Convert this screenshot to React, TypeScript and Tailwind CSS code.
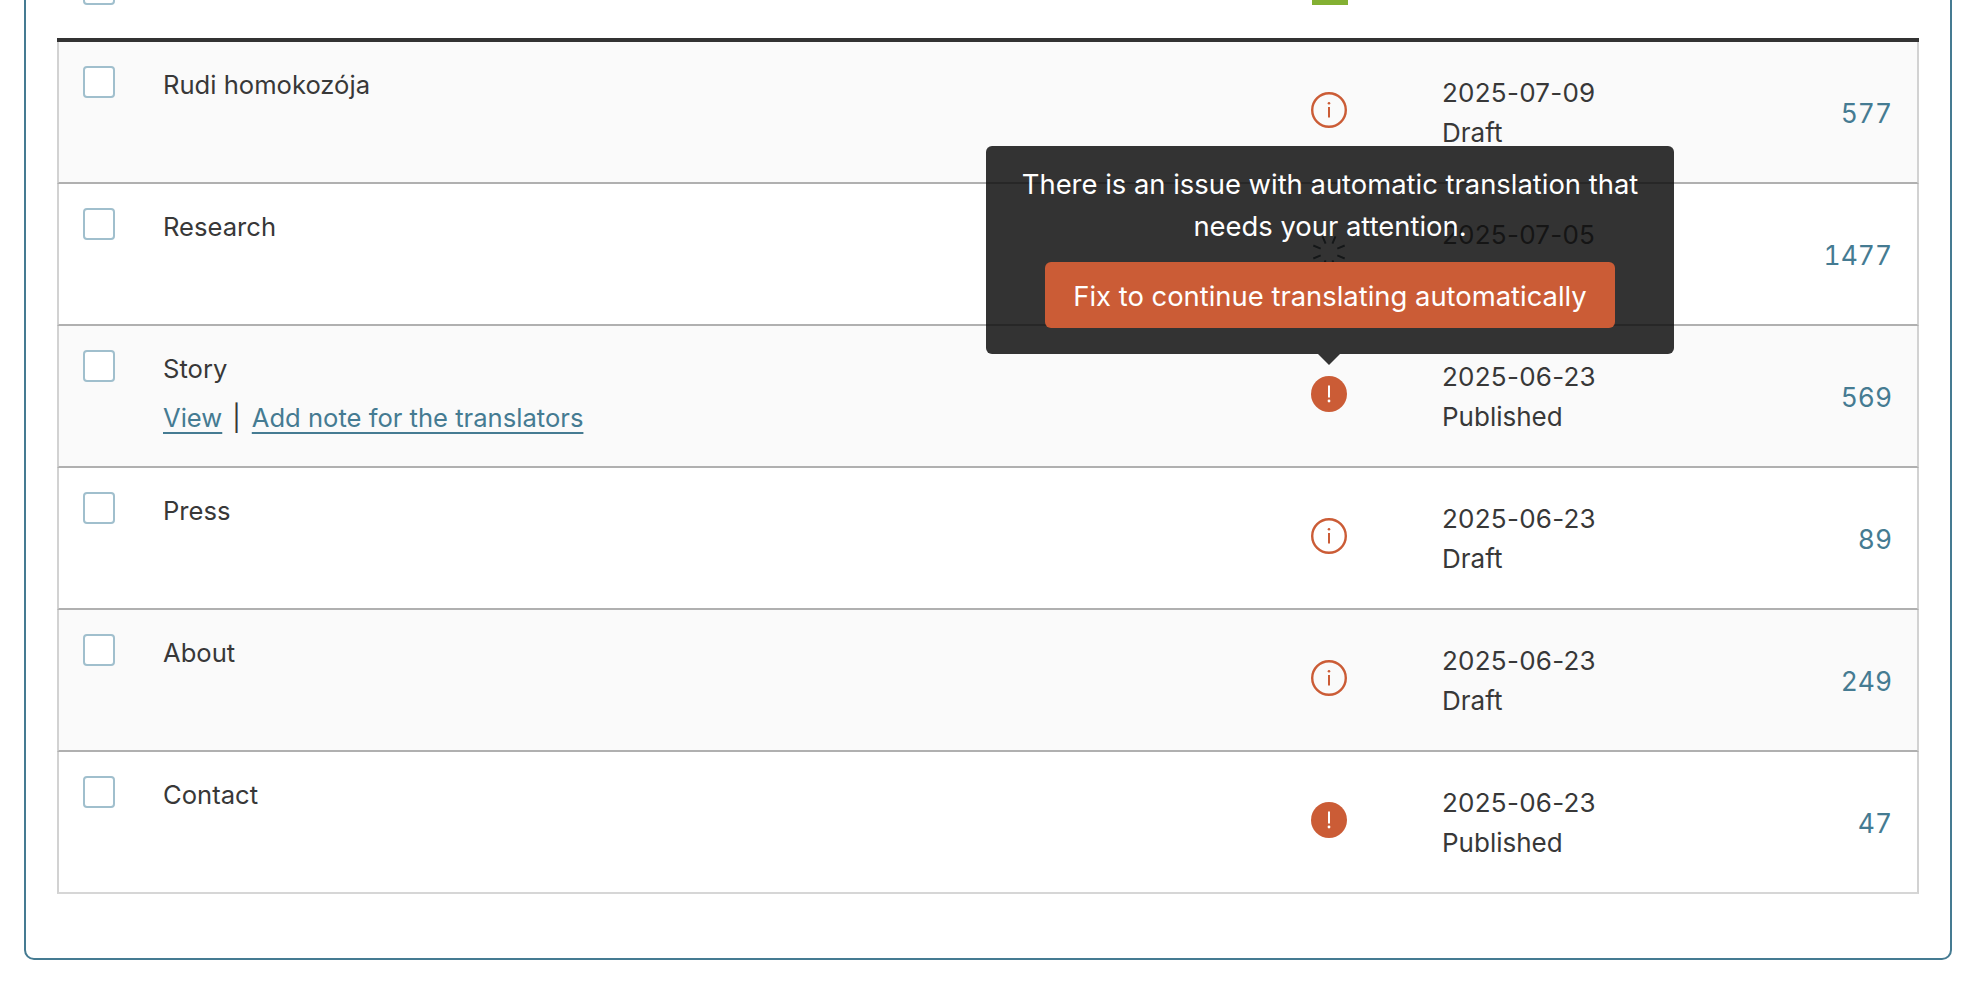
import React from "react";

type Row = {
  title: string;
  date: string;
  status: string;
  count: number;
  icon: "info" | "error" | "spinner";
  hovered?: boolean;
};

const rows: Row[] = [
  { title: "Rudi homokozója", date: "2025-07-09", status: "Draft", count: 577, icon: "info" },
  { title: "Research", date: "2025-07-05", status: "Draft", count: 1477, icon: "spinner" },
  { title: "Story", date: "2025-06-23", status: "Published", count: 569, icon: "error", hovered: true },
  { title: "Press", date: "2025-06-23", status: "Draft", count: 89, icon: "info" },
  { title: "About", date: "2025-06-23", status: "Draft", count: 249, icon: "info" },
  { title: "Contact", date: "2025-06-23", status: "Published", count: 47, icon: "error" },
];

const Checkbox = () => (
  <span className="block w-8 h-8 rounded-[4px] border-2 border-[#a0bfcd] bg-white" />
);

const StatusIcon = ({ icon }: { icon: Row["icon"] }) => {
  if (icon === "info") {
    return (
      <svg width="36" height="36" viewBox="0 0 36 36" fill="none">
        <circle cx="18" cy="18" r="16.8" stroke="#cb5c36" strokeWidth="2.4" />
        <circle cx="18" cy="11.2" r="1.3" fill="#cb5c36" />
        <path d="M18 15v10.5" stroke="#cb5c36" strokeWidth="2" />
      </svg>
    );
  }
  if (icon === "error") {
    return (
      <svg width="36" height="36" viewBox="0 0 36 36" fill="none">
        <circle cx="18" cy="18" r="18" fill="#cb5c36" />
        <path d="M18 9.5v12" stroke="#fff" strokeWidth="2" />
        <circle cx="18" cy="25" r="1.4" fill="#fff" />
      </svg>
    );
  }
  return (
    <svg width="36" height="36" viewBox="0 0 36 36" fill="none" stroke="#33424b" strokeWidth="2">
      <path d="M26.3 14.6l7.4-3.1M26.3 21.4l7.4 3.1M9.7 14.6l-7.4-3.1M9.7 21.4l-7.4 3.1M14.6 9.7l-3.1-7.4M21.4 9.7l3.1-7.4M14.6 26.3l-3.1 7.4M21.4 26.3l3.1 7.4" />
    </svg>
  );
};

const Tooltip = () => (
  <div className="absolute left-[-325px] bottom-[58px] z-10 w-[688px] h-[208px] rounded-[6px] bg-[rgba(15,15,15,0.85)] pt-[17px] flex flex-col items-center text-white text-center text-[27.4px]">
    <p className="leading-[42px] w-[640px]">
      There is an issue with automatic translation that needs your attention.
    </p>
    <button className="mt-[15px] h-[66px] w-[570px] rounded-[6px] bg-[#cb5c36] pt-[2px] text-white">
      Fix to continue translating automatically
    </button>
    <span className="absolute left-[332px] top-full w-0 h-0 border-x-[11px] border-x-transparent border-t-[11px] border-t-[rgba(15,15,15,0.85)]" />
  </div>
);

export default function App() {
  return (
    <div className="h-[984px] overflow-hidden bg-white font-[Inter,sans-serif] text-[25.6px] leading-[40px] text-[#383838]">
      <div className="mt-[-60px] ml-[24px] mr-[26px] h-[1020px] rounded-b-[10px] border-2 border-[#457b92] bg-white px-[31px]">
        {/* Header row, mostly scrolled out of view */}
        <div className="h-[100px] border-b-4 border-[#333333] grid grid-cols-[106px_1149px_130px_1fr] items-end pb-[33px]">
          <div className="pl-[26px]">
            <Checkbox />
          </div>
          <div />
          <div className="w-9 h-8 bg-[#83b032]" />
          <div />
        </div>

        {rows.map((row, i) => (
          <div
            key={row.title}
            className={`h-[142px] border-x-2 border-x-[#d2d2d2] border-b-2 grid grid-cols-[104px_1148px_131px_300px_1fr] ${
              i === rows.length - 1 ? "border-b-[#d6d6d6]" : "border-b-[#b0b0b0]"
            } ${i % 2 === 0 ? "bg-[#fafafa]" : "bg-white"}`}
          >
            <div className="pl-[24px] pt-[24px]">
              <Checkbox />
            </div>
            <div className="pt-[23px]">
              <div>{row.title}</div>
              {row.hovered && (
                <div className="mt-[9px] flex">
                  <a className="text-[#457b92] underline decoration-2 underline-offset-[5px]">View</a>
                  <span className="ml-[10px] mr-[11px]">|</span>
                  <a className="text-[#457b92] underline decoration-2 underline-offset-[5px]">
                    Add note for the translators
                  </a>
                </div>
              )}
            </div>
            <div className="relative flex items-center pb-1">
              <div className="relative">
                <StatusIcon icon={row.icon} />
                {row.hovered && <Tooltip />}
              </div>
            </div>
            <div className="flex flex-col justify-center pt-[2px]">
              <div className="text-[26px] tracking-[0.25px]">{row.date}</div>
              <div className="text-[26px]">{row.status}</div>
            </div>
            <div className="flex items-center justify-end pr-[25px] pt-[2px] text-[26.4px] tabular-nums text-[#457b92]">{row.count}</div>
          </div>
        ))}
      </div>
    </div>
  );
}
